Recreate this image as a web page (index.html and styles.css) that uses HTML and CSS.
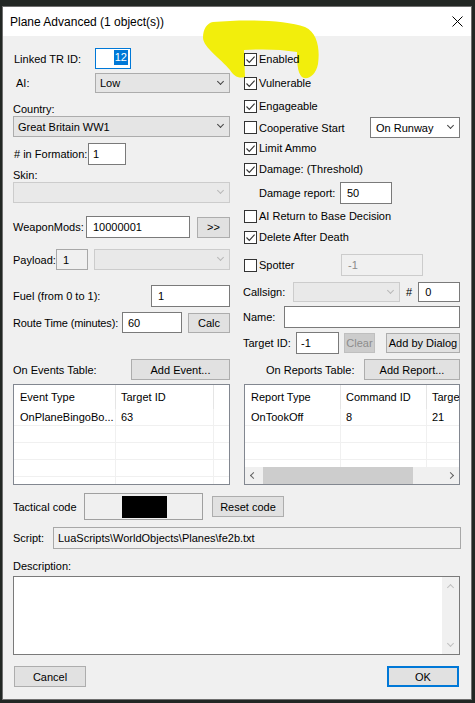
FILE: index.html
```html
<!DOCTYPE html>
<html>
<head>
<meta charset="utf-8">
<title>Plane Advanced</title>
<link rel="stylesheet" href="styles.css">
</head>
<body>
<div class="dialog">
  <div class="titlebar">
    <span class="title">Plane Advanced (1 object(s))</span>
    <svg class="close" viewBox="0 0 11 11" width="11" height="11"><path d="M0.5 0.5L10.5 10.5M10.5 0.5L0.5 10.5" stroke="#000" stroke-width="1" fill="none"/></svg>
  </div>
  <svg class="marker" width="475" height="110" viewBox="0 0 475 110">
    <path d="M213 22 C245 19 285 20 305 27 C318 33 320 50 318 64 C316 74 310 79 304 78 C298 76 297 66 297 52 C280 49 260 49 244 50 L245 77 C238 79 234 76 230 70 C220 58 204 48 203 38 C203 29 207 23 213 22 Z" fill="#f2ee0c"/>
  </svg>
  <div class="content">
    <div class="cols">
      <div class="col">
        <div class="row r-linked">
          <span class="lbl w-linked">Linked TR ID:</span>
          <div class="edit focus tr-id"><span class="sel">12</span></div>
        </div>
        <div class="row r-ai">
          <span class="lbl w-ai">AI:</span>
          <div class="combo w-aisel"><span>Low</span><i class="chev"></i></div>
        </div>
        <div class="blk country-lbl">Country:</div>
        <div class="combo full"><span>Great Britain WW1</span><i class="chev"></i></div>
        <div class="row r-form">
          <span class="lbl w-form"># in Formation:</span>
          <div class="edit w-formin">1</div>
        </div>
        <div class="blk skin-lbl">Skin:</div>
        <div class="combo dis full"><span></span><i class="chev"></i></div>
        <div class="row r-weap">
          <span class="lbl w-weap">WeaponMods:</span>
          <div class="edit w-weapin">10000001</div>
          <div class="btn w-more">&gt;&gt;</div>
        </div>
        <div class="row r-pay">
          <span class="lbl w-pay">Payload:</span>
          <div class="edit ro w-payin">1</div>
          <div class="combo dis w-paysel"><span></span><i class="chev"></i></div>
        </div>
        <div class="row r-fuel">
          <span class="lbl grow">Fuel (from 0 to 1):</span>
          <div class="edit w-fuel">1</div>
        </div>
        <div class="row r-route">
          <span class="lbl w-route">Route Time (minutes):</span>
          <div class="edit w-routein">60</div>
          <div class="btn w-calc">Calc</div>
        </div>
        <div class="row r-ev">
          <span class="lbl grow">On Events Table:</span>
          <div class="btn w-addev">Add Event...</div>
        </div>
        <div class="table events">
          <div class="tbody">
            <div class="tr th"><div class="td">Event Type</div><div class="td">Target ID</div><div class="td"></div></div>
            <div class="tr"><div class="td">OnPlaneBingoBo...</div><div class="td">63</div><div class="td"></div></div>
            <div class="tr"><div class="td"></div><div class="td"></div><div class="td"></div></div>
            <div class="tr"><div class="td"></div><div class="td"></div><div class="td"></div></div>
            <div class="tr"><div class="td"></div><div class="td"></div><div class="td"></div></div>
            <div class="tr"><div class="td"></div><div class="td"></div><div class="td"></div></div>
          </div>
        </div>
      </div>

      <div class="col">
        <div class="row cbrow r-en"><span class="cb"><svg viewBox="0 0 11 11" width="11" height="11"><path d="M1.5 5.5L4.3 8.4L9.6 2.6" fill="none" stroke="#333" stroke-width="1.1"/></svg></span><span>Enabled</span></div>
        <div class="row cbrow mt4"><span class="cb"><svg viewBox="0 0 11 11" width="11" height="11"><path d="M1.5 5.5L4.3 8.4L9.6 2.6" fill="none" stroke="#333" stroke-width="1.1"/></svg></span><span>Vulnerable</span></div>
        <div class="row cbrow mt3"><span class="cb"><svg viewBox="0 0 11 11" width="11" height="11"><path d="M1.5 5.5L4.3 8.4L9.6 2.6" fill="none" stroke="#333" stroke-width="1.1"/></svg></span><span>Engageable</span></div>
        <div class="row r-coop"><span class="cb"></span><span class="grow">Cooperative Start</span><div class="combo white w-runway"><span>On Runway</span><i class="chev"></i></div></div>
        <div class="row cbrow"><span class="cb"><svg viewBox="0 0 11 11" width="11" height="11"><path d="M1.5 5.5L4.3 8.4L9.6 2.6" fill="none" stroke="#333" stroke-width="1.1"/></svg></span><span>Limit Ammo</span></div>
        <div class="row cbrow mt1"><span class="cb"><svg viewBox="0 0 11 11" width="11" height="11"><path d="M1.5 5.5L4.3 8.4L9.6 2.6" fill="none" stroke="#333" stroke-width="1.1"/></svg></span><span>Damage: (Threshold)</span></div>
        <div class="row r-dmg">
          <span class="lbl w-dmg">Damage report:</span>
          <div class="edit w-dmgin">50</div>
        </div>
        <div class="row cbrow mt2"><span class="cb"></span><span>AI Return to Base Decision</span></div>
        <div class="row cbrow mt1"><span class="cb"><svg viewBox="0 0 11 11" width="11" height="11"><path d="M1.5 5.5L4.3 8.4L9.6 2.6" fill="none" stroke="#333" stroke-width="1.1"/></svg></span><span>Delete After Death</span></div>
        <div class="row r-spot">
          <span class="cb"></span><span class="w-spot">Spotter</span>
          <div class="edit dis w-spotin">-1</div>
        </div>
        <div class="row r-call">
          <span class="lbl w-call">Callsign:</span>
          <div class="combo dis w-callsel"><span></span><i class="chev"></i></div>
          <span class="hash">#</span>
          <div class="edit w-num">0</div>
        </div>
        <div class="row r-name">
          <span class="lbl w-name">Name:</span>
          <div class="edit w-namein"></div>
        </div>
        <div class="row r-tgt">
          <span class="lbl w-tgt">Target ID:</span>
          <div class="edit w-tgtin">-1</div>
          <div class="btn dis w-clear">Clear</div>
          <div class="btn w-addby">Add by Dialog</div>
        </div>
        <div class="row r-rep">
          <span class="lbl grow rep-lbl">On Reports Table:</span>
          <div class="btn w-addrep">Add Report...</div>
        </div>
        <div class="table reports">
          <div class="tbody">
            <div class="tr th"><div class="td">Report Type</div><div class="td">Command ID</div><div class="td">Target ID</div></div>
            <div class="tr"><div class="td">OnTookOff</div><div class="td">8</div><div class="td">21</div></div>
            <div class="tr"><div class="td"></div><div class="td"></div><div class="td"></div></div>
            <div class="tr"><div class="td"></div><div class="td"></div><div class="td"></div></div>
            <div class="tr"><div class="td"></div><div class="td"></div><div class="td"></div></div>
          </div>
          <div class="hscroll">
            <span class="sarrow"><i class="chev left"></i></span>
            <span class="thumb"></span>
            <span class="sarrow"><i class="chev right"></i></span>
          </div>
        </div>
      </div>
    </div>

    <div class="row r-tac">
      <span class="lbl w-tac">Tactical code</span>
      <div class="tacbox"><span class="tacblack"></span></div>
      <div class="btn w-reset">Reset code</div>
    </div>
    <div class="row r-script">
      <span class="lbl w-script">Script:</span>
      <div class="edit ro w-scriptin">LuaScripts\WorldObjects\Planes\fe2b.txt</div>
    </div>
    <div class="blk desc-lbl">Description:</div>
    <div class="textarea">
      <div class="vscroll">
        <span class="vsarrow"><i class="chev up"></i></span>
        <span class="vsarrow"><i class="chev"></i></span>
      </div>
    </div>
    <div class="row r-btns">
      <div class="btn w-dlg">Cancel</div>
      <div class="btn default w-dlg">OK</div>
    </div>
  </div>
</div>
</body>
</html>
```

FILE: styles.css
```css
* { box-sizing: border-box; }

body {
  margin: 0;
  width: 475px;
  height: 703px;
  overflow: hidden;
  background: #222724;
  font-family: "Liberation Sans", Arial, sans-serif;
  font-size: 11px;
  color: #000;
}

.dialog {
  position: relative;
  margin: 6px 0 0 2px;
  width: 470px;
  height: 694px;
  border: 1px solid #6f6f6f;
  background: #f0f0f0;
}

.titlebar {
  height: 29px;
  background: #fff;
  display: flex;
  align-items: center;
  justify-content: space-between;
  padding: 0 8px 0 7px;
}

.title { font-size: 12px; }

.marker {
  position: absolute;
  left: -3px;
  top: -7px;
  z-index: 1;
  pointer-events: none;
}

.content {
  position: relative;
  z-index: 2;
  padding: 12px 11px 0 10px;
}

.cols { display: flex; gap: 13px; }
.col { width: 217px; display: flex; flex-direction: column; }

.row { display: flex; align-items: center; flex: none; }
.lbl { flex: none; white-space: nowrap; }
.grow { flex: 1; }
.blk { line-height: 14px; flex: none; }

.mt1 { margin-top: 1px; }
.mt2 { margin-top: 2px; }
.mt3 { margin-top: 3px; }
.mt4 { margin-top: 4px; }

/* controls */
.edit {
  flex: none;
  height: 100%;
  background: #fff;
  border: 1px solid #7a7a7a;
  padding: 0 5px;
  display: flex;
  align-items: center;
  white-space: nowrap;
  overflow: hidden;
}
.edit.focus { border-color: #0078d7; justify-content: flex-end; padding: 1px 2px 0 0; align-items: flex-start; }
.edit.ro { background: #f0f0f0; border-color: #a8a8a8; }
.edit.dis { background: #f0f0f0; border-color: #cccccc; color: #8a8a8a; }
.sel { background: #0078d7; color: #fff; line-height: 15px; padding: 0 1px; }

.combo {
  flex: none;
  height: 100%;
  background: #e5e5e5;
  border: 1px solid #acacac;
  display: flex;
  align-items: center;
  justify-content: space-between;
  padding: 0 6px 0 4px;
  white-space: nowrap;
}
.combo.full { width: 217px; height: 21px; }
.combo.dis { background: #e9e9e9; border-color: #cccccc; }
.combo.white { background: #fff; border-color: #7a7a7a; }

.chev {
  display: block;
  width: 5px;
  height: 5px;
  border-right: 1px solid #444;
  border-bottom: 1px solid #444;
  transform: translateY(-2px) rotate(45deg);
}
.combo.dis .chev { border-color: #b8b8b8; }
.chev.up { transform: translateY(2px) rotate(225deg); }
.chev.left { transform: rotate(135deg); }
.chev.right { transform: rotate(-45deg); }

.btn {
  flex: none;
  height: 100%;
  background: #e1e1e1;
  border: 1px solid #adadad;
  display: flex;
  align-items: center;
  justify-content: center;
  white-space: nowrap;
}
.btn.dis { background: #cccccc; border-color: #bfbfbf; color: #8d8d8d; }
.btn.default { border: 2px solid #0078d7; }

/* left column rows */
.r-linked { height: 21px; }
.w-linked { width: 82px; padding-left: 1px; }
.tr-id { width: 36px; }

.r-ai { height: 20px; margin-top: 4px; }
.w-ai { width: 82px; padding-left: 3px; }
.w-aisel { width: 135px; }

.country-lbl { margin-top: 9px; }

.r-form { height: 22px; margin-top: 6px; }
.w-form { width: 75px; padding-left: 1px; }
.w-formin { width: 38px; padding-left: 4px; }

.skin-lbl { margin-top: 4px; line-height: 13px; }

.r-weap { height: 22px; margin-top: 13px; }
.w-weap { width: 73px; }
.w-weapin { width: 104px; padding-left: 6px; }
.w-more { width: 33px; height: 21px; margin-left: 7px; }

.r-pay { height: 21px; margin-top: 11px; }
.w-pay { width: 43px; }
.w-payin { width: 32px; padding-left: 6px; border-color: #7a7a7a; }
.w-paysel { width: 136px; margin-left: 6px; }

.r-fuel { height: 22px; margin-top: 15px; }
.w-fuel { width: 79px; padding-left: 6px; }

.r-route { height: 21px; margin-top: 5px; }
.w-route { width: 109px; letter-spacing: -0.15px; }
.w-routein { width: 60px; }
.w-calc { width: 42px; height: 20px; margin-left: 6px; }

.r-ev { height: 21px; margin-top: 26px; }
.w-addev { width: 99px; }

/* tables */
.table {
  flex: none;
  margin-top: 4px;
  height: 101px;
  border: 1px solid #828790;
  background: #fff;
  display: flex;
  flex-direction: column;
  overflow: hidden;
}
.tbody { flex: 1; overflow: hidden; }
.tr {
  display: grid;
  height: 17px;
  border-bottom: 1px solid #f0f0f0;
}
.tr.th { height: 24px; border-bottom: none; }
.td {
  border-right: 1px solid #f0f0f0;
  padding-left: 5px;
  display: flex;
  align-items: center;
  white-space: nowrap;
  overflow: hidden;
}
.th .td { border-right-color: #e5e5e5; }
.events .tr { grid-template-columns: 102px 98px 20px; }
.events .tr .td:first-child { padding-left: 6px; }
.reports { margin-left: 1px; width: 216px; }
.reports .tr { grid-template-columns: 96px 86px 80px; }
.reports .tr .td:first-child { padding-left: 6px; }

.hscroll {
  flex: none;
  height: 17px;
  background: #f0f0f0;
  display: flex;
  align-items: center;
}
.sarrow {
  width: 17px;
  height: 17px;
  display: flex;
  align-items: center;
  justify-content: center;
}
.sarrow .chev { border-color: #606060; }
.thumb { width: 150px; height: 17px; background: #cdcdcd; margin-left: 1px; }
.hscroll .sarrow:last-child { margin-left: auto; }

/* right column */
.cbrow { height: 20px; }
.r-en { margin-top: 1px; }
.r-coop { height: 21px; margin-top: 1px; }
.cb {
  flex: none;
  width: 13px;
  height: 13px;
  border: 1px solid #333;
  background: #fff;
  margin: 0 2px 0 1px;
  display: flex;
}
.w-runway { width: 90px; padding-left: 5px; }

.r-dmg { height: 22px; margin-top: 3px; }
.w-dmg { width: 97px; padding-left: 16px; }
.w-dmgin { width: 52px; padding-left: 6px; }

.r-spot { height: 22px; margin-top: 7px; }
.w-spot { width: 82px; }
.w-spotin { width: 82px; padding-left: 6px; }

.r-call { height: 20px; margin-top: 6px; }
.w-call { width: 50px; }
.w-callsel { width: 107px; }
.hash { margin: 0 6px; }
.w-num { width: 42px; padding-left: 6px; }

.r-name { height: 22px; margin-top: 4px; }
.w-name { width: 41px; }
.w-namein { width: 176px; }

.r-tgt { height: 22px; margin-top: 4px; }
.w-tgt { width: 53px; }
.w-tgtin { width: 43px; padding-left: 4px; }
.w-clear { width: 31px; height: 20px; margin-left: 5px; }
.w-addby { width: 74px; height: 20px; margin-left: 11px; }

.r-rep { height: 21px; margin-top: 5px; }
.rep-lbl { padding-left: 23px; }
.w-addrep { width: 96px; }

/* bottom area */
.r-tac { height: 27px; margin-top: 8px; }
.w-tac { width: 71px; }
.tacbox {
  width: 119px;
  height: 27px;
  border: 1px solid #a0a0a0;
  background: #f0f0f0;
  display: flex;
  align-items: center;
  justify-content: center;
}
.tacblack { width: 45px; height: 22px; background: #000; margin-left: 1px; }
.w-reset { width: 72px; height: 21px; margin-left: 9px; }

.r-script { height: 22px; margin-top: 7px; }
.w-script { width: 40px; }
.w-scriptin { width: 408px; padding-left: 4px; border-color: #adadad; }

.desc-lbl { margin-top: 10px; }

.textarea {
  margin-top: 3px;
  height: 79px;
  border: 1px solid #7a7a7a;
  background: #fff;
  display: flex;
  justify-content: flex-end;
}
.vscroll {
  width: 17px;
  background: #f0f0f0;
  display: flex;
  flex-direction: column;
  justify-content: space-between;
}
.vsarrow {
  height: 17px;
  display: flex;
  align-items: center;
  justify-content: center;
}
.vsarrow .chev { border-color: #c0c0c0; }

.r-btns { height: 21px; margin-top: 11px; justify-content: space-between; padding: 0 1px 0 1px; }
.w-dlg { width: 72px; }
```
